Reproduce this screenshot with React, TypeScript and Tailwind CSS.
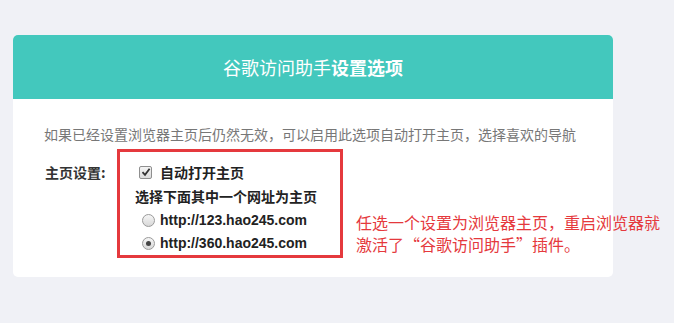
import type { ReactNode } from "react";

const cjk = "font-['Noto_Sans_CJK_SC','Noto_Sans',sans-serif]";

function CheckBox({ checked }: { checked: boolean }) {
  return (
    <span className="flex h-[13px] w-[13px] items-center justify-center rounded-[2px] border border-[#8f8f8f] bg-gradient-to-b from-[#f4f4f4] to-[#dcdcdc]">
      {checked && (
        <svg width="10" height="10" viewBox="0 0 10 10">
          <path d="M1.5 5.2 L4 7.8 L8.6 1.8" fill="none" stroke="#333" strokeWidth="1.8" />
        </svg>
      )}
    </span>
  );
}

function Radio({ checked }: { checked: boolean }) {
  return (
    <span className="flex h-[13px] w-[13px] items-center justify-center rounded-full border border-[#9a9a9a] bg-gradient-to-b from-[#f6f6f6] to-[#d8d8d8]">
      {checked && <span className="h-[5px] w-[5px] rounded-full bg-[#444]" />}
    </span>
  );
}

function Row({ children, className = "" }: { children: ReactNode; className?: string }) {
  return <div className={`flex items-center ${className}`}>{children}</div>;
}

export default function App() {
  return (
    <div className={`relative min-h-[323px] w-[674px] bg-[#f0f1f6] pt-[35px] pl-[13px] ${cjk}`}>
      <div className="w-[600px] overflow-hidden rounded-[5px] bg-white">
        <div className="flex h-[64px] items-center justify-center bg-[#43c8bd] text-[18px] text-white">
          <span>谷歌访问助手</span>
          <span className="font-bold">设置选项</span>
        </div>

        <div className="pt-[25px] pb-[19px] pl-[31px]">
          <p className="text-[14px] leading-[20px] text-[#777]">
            如果已经设置浏览器主页后仍然无效，可以启用此选项自动打开主页，选择喜欢的导航
          </p>

          <div className="mt-[5px] flex">
            <div className="w-[73px] pt-[13px] pl-[1px] text-[14px] leading-[20px] font-bold text-[#333]">
              主页设置:
            </div>
            <div className="w-[226px] border-[3px] border-[#e5393d] pt-[8px] pl-[15px] text-[14px] font-bold text-[#222]">
              <Row className="h-[24px] pl-[4px]">
                <CheckBox checked />
                <span className="ml-[8px]">自动打开主页</span>
              </Row>
              <Row className="h-[25px]">
                <span>选择下面其中一个网址为主页</span>
              </Row>
              <Row className="h-[23px] pl-[7px]">
                <Radio checked={false} />
                <span className="ml-[5px] font-['Liberation_Sans',Arial,sans-serif]">
                  http://123.hao245.com
                </span>
              </Row>
              <Row className="h-[23px] pl-[7px]">
                <Radio checked />
                <span className="ml-[5px] font-['Liberation_Sans',Arial,sans-serif]">
                  http://360.hao245.com
                </span>
              </Row>
            </div>
          </div>
        </div>
      </div>

      <p className="absolute top-[211px] left-[356px] text-[16px] leading-[22px] whitespace-nowrap text-[#e5393d]">
        任选一个设置为浏览器主页，重启浏览器就
        <br />
        激活了“谷歌访问助手”插件。
      </p>
    </div>
  );
}
